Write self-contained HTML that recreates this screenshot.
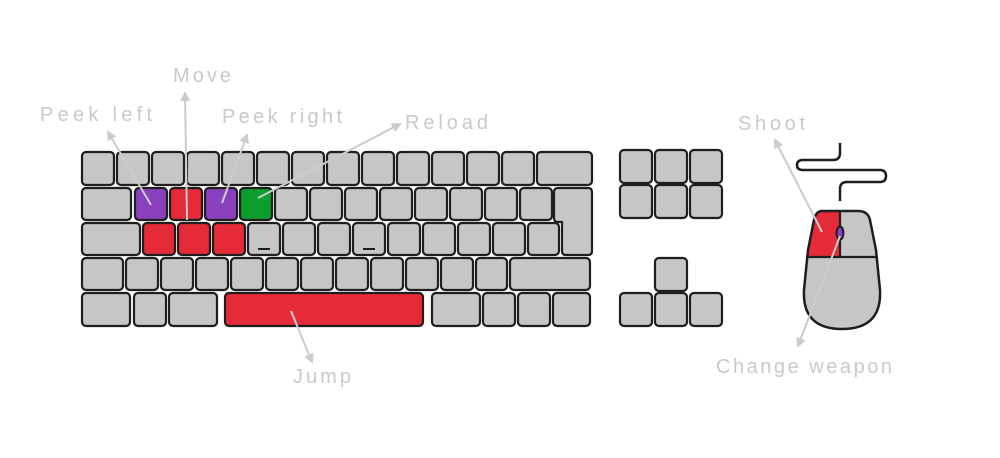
<!DOCTYPE html>
<html><head><meta charset="utf-8"><style>
html,body{margin:0;padding:0;background:#fff;width:1000px;height:458px;overflow:hidden}
svg{display:block}
text{font-family:"Liberation Sans",sans-serif;font-size:20px;fill:#c9c9c9}
</style></head><body>
<svg width="1000" height="458" viewBox="0 0 1000 458" xmlns="http://www.w3.org/2000/svg">
<defs>
<marker id="ah" markerWidth="10" markerHeight="10" refX="8" refY="5" orient="auto" markerUnits="userSpaceOnUse">
<path d="M0,0 L10,5 L0,10 Z" fill="#cccccc"/>
</marker>
</defs>
<g stroke="#1e1e1e" stroke-width="2.2" fill="#c6c6c6">
<rect x="82" y="152" width="32" height="33" rx="4"/>
<rect x="117" y="152" width="32" height="33" rx="4"/>
<rect x="152" y="152" width="32" height="33" rx="4"/>
<rect x="187" y="152" width="32" height="33" rx="4"/>
<rect x="222" y="152" width="32" height="33" rx="4"/>
<rect x="257" y="152" width="32" height="33" rx="4"/>
<rect x="292" y="152" width="32" height="33" rx="4"/>
<rect x="327" y="152" width="32" height="33" rx="4"/>
<rect x="362" y="152" width="32" height="33" rx="4"/>
<rect x="397" y="152" width="32" height="33" rx="4"/>
<rect x="432" y="152" width="32" height="33" rx="4"/>
<rect x="467" y="152" width="32" height="33" rx="4"/>
<rect x="502" y="152" width="32" height="33" rx="4"/>
<rect x="537" y="152" width="55" height="33" rx="4"/>
<rect x="82" y="188" width="49" height="32" rx="4"/>
<rect x="135" y="188" width="32" height="32" rx="4" fill="#8a3fbf"/>
<rect x="170" y="188" width="32" height="32" rx="4" fill="#e52a38"/>
<rect x="205" y="188" width="32" height="32" rx="4" fill="#8a3fbf"/>
<rect x="240" y="188" width="32" height="32" rx="4" fill="#0a9e2e"/>
<rect x="275" y="188" width="32" height="32" rx="4"/>
<rect x="310" y="188" width="32" height="32" rx="4"/>
<rect x="345" y="188" width="32" height="32" rx="4"/>
<rect x="380" y="188" width="32" height="32" rx="4"/>
<rect x="415" y="188" width="32" height="32" rx="4"/>
<rect x="450" y="188" width="32" height="32" rx="4"/>
<rect x="485" y="188" width="32" height="32" rx="4"/>
<rect x="520" y="188" width="32" height="32" rx="4"/>
<path d="M558 188 H588 Q592 188 592 192 V251 Q592 255 588 255 H566 Q562 255 562 251 V222 H558 Q554 222 554 218 V192 Q554 188 558 188 Z"/>
<rect x="82" y="223" width="58" height="32" rx="4"/>
<rect x="143" y="223" width="32" height="32" rx="4" fill="#e52a38"/>
<rect x="178" y="223" width="32" height="32" rx="4" fill="#e52a38"/>
<rect x="213" y="223" width="32" height="32" rx="4" fill="#e52a38"/>
<rect x="248" y="223" width="32" height="32" rx="4"/>
<rect x="283" y="223" width="32" height="32" rx="4"/>
<rect x="318" y="223" width="32" height="32" rx="4"/>
<rect x="353" y="223" width="32" height="32" rx="4"/>
<rect x="388" y="223" width="32" height="32" rx="4"/>
<rect x="423" y="223" width="32" height="32" rx="4"/>
<rect x="458" y="223" width="32" height="32" rx="4"/>
<rect x="493" y="223" width="32" height="32" rx="4"/>
<rect x="528" y="223" width="31" height="32" rx="4"/>
<rect x="82" y="258" width="41" height="32" rx="4"/>
<rect x="126" y="258" width="32" height="32" rx="4"/>
<rect x="161" y="258" width="32" height="32" rx="4"/>
<rect x="196" y="258" width="32" height="32" rx="4"/>
<rect x="231" y="258" width="32" height="32" rx="4"/>
<rect x="266" y="258" width="32" height="32" rx="4"/>
<rect x="301" y="258" width="32" height="32" rx="4"/>
<rect x="336" y="258" width="32" height="32" rx="4"/>
<rect x="371" y="258" width="32" height="32" rx="4"/>
<rect x="406" y="258" width="32" height="32" rx="4"/>
<rect x="441" y="258" width="32" height="32" rx="4"/>
<rect x="476" y="258" width="31" height="32" rx="4"/>
<rect x="510" y="258" width="80" height="32" rx="4"/>
<rect x="82" y="293" width="48" height="33" rx="4"/>
<rect x="134" y="293" width="32" height="33" rx="4"/>
<rect x="169" y="293" width="48" height="33" rx="4"/>
<rect x="225" y="293" width="198" height="33" rx="4" fill="#e52a38"/>
<rect x="432" y="293" width="48" height="33" rx="4"/>
<rect x="483" y="293" width="32" height="33" rx="4"/>
<rect x="518" y="293" width="32" height="33" rx="4"/>
<rect x="553" y="293" width="37" height="33" rx="4"/>
<rect x="620" y="150" width="32" height="33" rx="4"/>
<rect x="655" y="150" width="32" height="33" rx="4"/>
<rect x="690" y="150" width="32" height="33" rx="4"/>
<rect x="620" y="185" width="32" height="33" rx="4"/>
<rect x="655" y="185" width="32" height="33" rx="4"/>
<rect x="690" y="185" width="32" height="33" rx="4"/>
<rect x="655" y="258" width="32" height="33" rx="4"/>
<rect x="620" y="293" width="32" height="33" rx="4"/>
<rect x="655" y="293" width="32" height="33" rx="4"/>
<rect x="690" y="293" width="32" height="33" rx="4"/>
</g>
<g stroke="#1e1e1e" stroke-width="2">
<line x1="258" y1="249" x2="270" y2="249"/>
<line x1="363" y1="249" x2="375" y2="249"/>
</g>
<path d="M840 143 V153 Q840 160 833 160 H803 Q797 160 797 165 Q797 170 803 170 H880 Q886 170 886 176 Q886 182 880 182 H847 Q840 182 840 189 V201" fill="none" stroke="#1e1e1e" stroke-width="2.5"/>
<path d="M822 211 L858 211 Q868 211 870 220 L876 250 L880 290 Q882 329 842 329 Q802 329 804 290 L808 250 L814 220 Q816 211 822 211 Z" fill="#c6c6c6"/>
<path d="M840 211 L822 211 Q816 211 814 220 L808 250 L807 257 L840 257 Z" fill="#e52a38"/>
<path d="M822 211 L858 211 Q868 211 870 220 L876 250 L880 290 Q882 329 842 329 Q802 329 804 290 L808 250 L814 220 Q816 211 822 211 Z" fill="none" stroke="#1e1e1e" stroke-width="2.5"/>
<line x1="806" y1="257" x2="877" y2="257" stroke="#1e1e1e" stroke-width="2.2"/>
<line x1="840" y1="211" x2="840" y2="257" stroke="#1e1e1e" stroke-width="2.2"/>
<ellipse cx="840" cy="233" rx="3.5" ry="6.5" fill="#8a3fbf" stroke="#1e1e1e" stroke-width="2"/>
<g stroke="#cccccc" stroke-width="2" fill="none" marker-end="url(#ah)">
<line x1="151" y1="205" x2="108" y2="132"/>
<line x1="187" y1="220" x2="185" y2="93"/>
<line x1="222" y1="203" x2="247" y2="135"/>
<line x1="258" y1="198" x2="400" y2="124"/>
<line x1="291" y1="311" x2="312" y2="362"/>
<line x1="822" y1="232" x2="775" y2="140"/>
<line x1="840" y1="236" x2="798" y2="346"/>
</g>
<text x="173" y="82" textLength="58" lengthAdjust="spacing">Move</text>
<text x="40" y="121" textLength="112" lengthAdjust="spacing">Peek left</text>
<text x="222" y="123" textLength="120" lengthAdjust="spacing">Peek right</text>
<text x="405" y="129" textLength="83" lengthAdjust="spacing">Reload</text>
<text x="738" y="130" textLength="67" lengthAdjust="spacing">Shoot</text>
<text x="293" y="383" textLength="58" lengthAdjust="spacing">Jump</text>
<text x="716" y="373" textLength="176" lengthAdjust="spacing">Change weapon</text>
</svg>
</body></html>
